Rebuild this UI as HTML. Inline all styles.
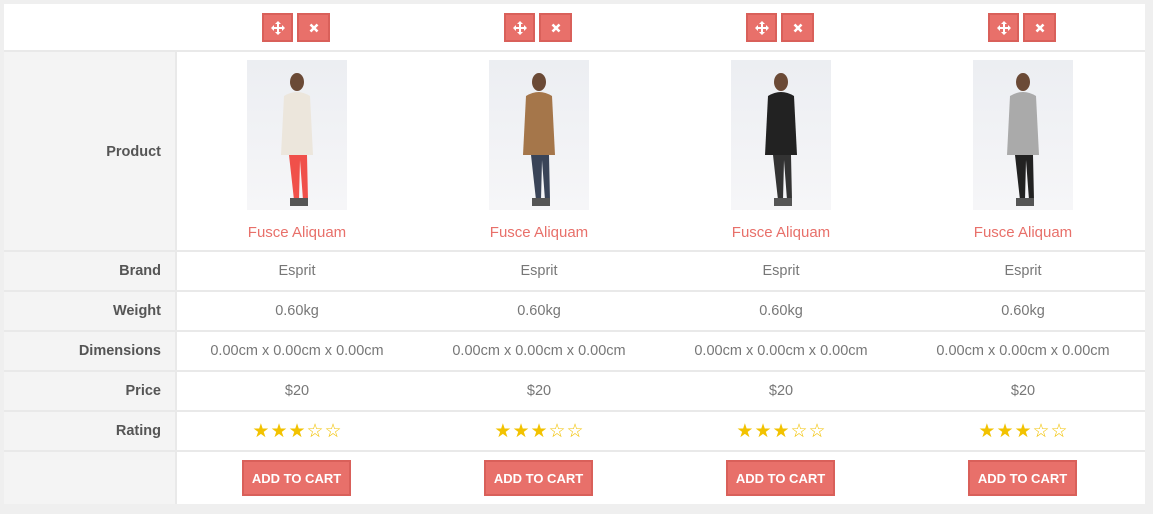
<!DOCTYPE html>
<html><head><style>
*{margin:0;padding:0;box-sizing:border-box}
body{width:1153px;height:514px;background:#efefef;font-family:"Liberation Sans",sans-serif;position:relative;overflow:hidden}
.t{position:absolute;left:4px;top:4px;width:1141px;height:500px;background:#fff}
.lab{position:absolute;left:4px;width:171px;background:#f4f4f4;color:#555;font-weight:bold;font-size:14.5px;text-align:right;padding-right:14px}
.hl{position:absolute;left:4px;width:1141px;height:2px;background:#e9e9e9}
.vl{position:absolute;left:175px;top:52px;width:2px;height:452px;background:#e9e9e9}
.c{position:absolute;color:#777;font-size:14.5px;text-align:center;width:242px}
.btn{position:absolute;background:#e8706a;border:2px solid #d9605a;color:#fff}
.ib{width:32px;height:29px;top:13px;display:flex;align-items:center;justify-content:center}
.cart{top:460px;width:109px;height:36px;font-weight:bold;font-size:13px;display:flex;align-items:center;justify-content:center}
.img{position:absolute;top:60px;width:100px;height:150px;background:linear-gradient(#eceef2,#f6f6f8)}
.ttl{position:absolute;top:224px;width:242px;text-align:center;color:#e8706a;font-size:15px}
.st{position:absolute;top:422px;color:#f2c200;font-size:19px;letter-spacing:1px;width:242px;text-align:center;line-height:19px;padding-left:1px}
</style></head><body>
<div class="t"></div>
<div class="lab" style="top:52px;height:198px;line-height:200px">Product</div>
<div class="lab" style="top:252px;height:38px;line-height:38px">Brand</div>
<div class="lab" style="top:292px;height:38px;line-height:38px">Weight</div>
<div class="lab" style="top:332px;height:38px;line-height:38px">Dimensions</div>
<div class="lab" style="top:372px;height:38px;line-height:38px">Price</div>
<div class="lab" style="top:412px;height:38px;line-height:38px">Rating</div>
<div class="lab" style="top:452px;height:52px"></div>
<div class="hl" style="top:50px"></div>
<div class="hl" style="top:250px"></div>
<div class="hl" style="top:290px"></div>
<div class="hl" style="top:330px"></div>
<div class="hl" style="top:370px"></div>
<div class="hl" style="top:410px"></div>
<div class="hl" style="top:450px"></div>
<div class="vl"></div>

<div id="cols"></div>
<script>
var cols=[176,418,660,902];
var shirts=["#ece6dc","#a5764a","#222","#aaa"];
var legs=["#f0504a","#3a4458","#333","#222"];
var h="";
cols.forEach(function(x,i){
 var cx=x+121;
 h+='<div class="btn ib" style="left:'+(cx-35)+'px;width:31px"><svg width="14" height="14" viewBox="0 0 14 14"><path d="M7 0L10 3H8V6H11V4L14 7L11 10V8H8V11H10L7 14L4 11H6V8H3V10L0 7L3 4V6H6V3H4Z" fill="#fff"/></svg></div>';
 h+='<div class="btn ib" style="left:'+cx+'px;width:33px"><svg width="10" height="10" viewBox="0 0 10 10"><path d="M1.5 1.5L8.5 8.5M8.5 1.5L1.5 8.5" stroke="#fff" stroke-width="2.6"/></svg></div>';
 h+='<div class="img" style="left:'+(cx-50)+'px"><svg width="100" height="150"><ellipse cx="50" cy="22" rx="7" ry="9" fill="#6b4a36"/><path d="M37 36Q50 28 63 36L66 95L34 95Z" fill="'+shirts[i]+'"/><path d="M42 95L47 140H52L53 100L56 140H61L60 95Z" fill="'+legs[i]+'"/><rect x="43" y="138" width="9" height="8" fill="#555"/><rect x="52" y="138" width="9" height="8" fill="#555"/></svg></div>';
 h+='<div class="ttl" style="left:'+x+'px">Fusce Aliquam</div>';
 h+='<div class="c" style="left:'+x+'px;top:252px;line-height:38px">Esprit</div>';
 h+='<div class="c" style="left:'+x+'px;top:292px;line-height:38px">0.60kg</div>';
 h+='<div class="c" style="left:'+x+'px;top:332px;line-height:38px">0.00cm x 0.00cm x 0.00cm</div>';
 h+='<div class="c" style="left:'+x+'px;top:372px;line-height:38px">$20</div>';
 h+='<div class="st" style="left:'+x+'px">★★★☆☆</div>';
 h+='<div class="btn cart" style="left:'+(cx-55)+'px">ADD TO CART</div>';
});
document.getElementById("cols").innerHTML=h;
</script>
</body></html>
